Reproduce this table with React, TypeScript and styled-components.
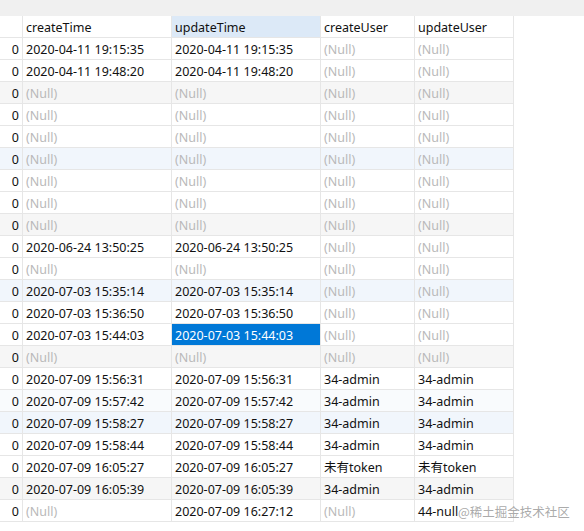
import React from "react";
import styled, { createGlobalStyle } from "styled-components";

const Global = createGlobalStyle`
  html, body { margin: 0; padding: 0; background: #ffffff; }
  body { font-family: "Noto Sans", "Noto Sans CJK SC", sans-serif; font-size: 12px; }
`;

const Page = styled.div`
  position: relative;
  width: 584px;
  height: 531px;
  overflow: hidden;
  background: #ffffff;
`;

const TopBar = styled.div`
  height: 16px;
  background: #f0f0f0;
`;

const Grid = styled.div`
  width: 514px;
  display: flex;
  flex-direction: column;
`;

const Row = styled.div<{ $bg?: string }>`
  display: grid;
  grid-template-columns: 23px 149px 149px 94px 99px;
  height: 22px;
  background: ${(p) => p.$bg || "#ffffff"};
`;

const Cell = styled.div<{ $null?: boolean; $selected?: boolean; $head?: boolean; $active?: boolean; $num?: boolean }>`
  box-sizing: border-box;
  height: 22px;
  line-height: 23px;
  padding: 0 ${(p) => (p.$num ? "3px" : "0")} 0 ${(p) => (p.$num ? "0" : "3px")};
  text-align: ${(p) => (p.$num ? "right" : "left")};
  border-right: 1px solid #e6e6e6;
  border-bottom: 1px solid #e6e6e6;
  white-space: nowrap;
  overflow: hidden;
  color: ${(p) => (p.$selected ? "#ffffff" : p.$null ? "#b9b9b9" : "#111111")};
  background: ${(p) =>
    p.$selected ? "#0078d7" : p.$active ? "#dce9f7" : p.$head ? "#ffffff" : "transparent"};
  font-size: 12.5px;
`;

const Watermark = styled.div`
  position: absolute;
  left: 458px;
  top: 502px;
  white-space: nowrap;
  font-family: "Noto Sans CJK SC", sans-serif;
  font-size: 12.5px;
  color: rgba(160, 160, 160, 0.9);
  text-shadow: 0 0 2px rgba(255, 255, 255, 0.9);
`;

type R = [string | null, string | null, string | null, string | null, string?];

const N = null;
const rows: R[] = [
  ["2020-04-11 19:15:35", "2020-04-11 19:15:35", N, N],
  ["2020-04-11 19:48:20", "2020-04-11 19:48:20", N, N],
  [N, N, N, N, "#f6f6f6"],
  [N, N, N, N],
  [N, N, N, N],
  [N, N, N, N, "#f1f6fc"],
  [N, N, N, N],
  [N, N, N, N],
  [N, N, N, N, "#f6f6f6"],
  ["2020-06-24 13:50:25", "2020-06-24 13:50:25", N, N],
  [N, N, N, N],
  ["2020-07-03 15:35:14", "2020-07-03 15:35:14", N, N, "#f1f6fc"],
  ["2020-07-03 15:36:50", "2020-07-03 15:36:50", N, N],
  ["2020-07-03 15:44:03", "2020-07-03 15:44:03", N, N],
  [N, N, N, N, "#f6f6f6"],
  ["2020-07-09 15:56:31", "2020-07-09 15:56:31", "34-admin", "34-admin"],
  ["2020-07-09 15:57:42", "2020-07-09 15:57:42", "34-admin", "34-admin", "#f9fbfd"],
  ["2020-07-09 15:58:27", "2020-07-09 15:58:27", "34-admin", "34-admin", "#f1f6fc"],
  ["2020-07-09 15:58:44", "2020-07-09 15:58:44", "34-admin", "34-admin"],
  ["2020-07-09 16:05:27", "2020-07-09 16:05:27", "未有token", "未有token"],
  ["2020-07-09 16:05:39", "2020-07-09 16:05:39", "34-admin", "34-admin", "#f6f6f6"],
  [N, "2020-07-09 16:27:12", N, "44-null"],
];

const headers = ["createTime", "updateTime", "createUser", "updateUser"];

export default function App() {
  return (
    <Page>
      <Global />
      <TopBar />
      <Grid>
        <Row>
          <Cell $head $num />
          {headers.map((h) => (
            <Cell key={h} $head $active={h === "updateTime"}>
              {h}
            </Cell>
          ))}
        </Row>
        {rows.map((r, i) => (
          <Row key={i} $bg={r[4]}>
            <Cell $num>0</Cell>
            {r.slice(0, 4).map((v, j) => (
              <Cell key={j} $null={v === null} $selected={i === 13 && j === 1}>
                {v === null ? "(Null)" : v}
              </Cell>
            ))}
          </Row>
        ))}
      </Grid>
      <Watermark>@稀土掘金技术社区</Watermark>
    </Page>
  );
}
